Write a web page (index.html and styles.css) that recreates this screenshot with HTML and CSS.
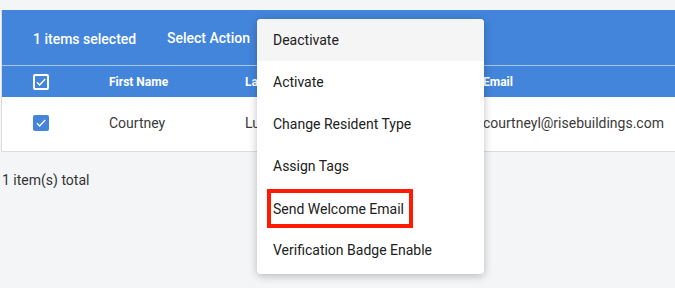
FILE: index.html
```html
<!DOCTYPE html>
<html lang="en">
<head>
  <meta charset="UTF-8" />
  <title>Residents</title>
  <link rel="stylesheet" href="styles.css">
</head>
<body>

  <!-- Residents table -->
  <div class="panel">
    <div class="bulkbar">
      <span class="count">1 items selected</span>
      <span class="action">Select Action</span>
    </div>
    <div class="row head">
      <span class="check outline">
        <svg viewBox="0 0 16 16" width="16" height="16"><path d="M4 8.3l2.6 2.6L12.2 5" fill="none" stroke="#fff" stroke-width="1.4"/></svg>
      </span>
      <span>First Name</span>
      <span>Last Name</span>
      <span>Email</span>
    </div>
    <div class="row body">
      <span class="check filled">
        <svg viewBox="0 0 16 16" width="16" height="16"><path d="M4 8.3l2.6 2.6L12.2 5" fill="none" stroke="#fff" stroke-width="1.4"/></svg>
      </span>
      <span>Courtney</span>
      <span>Luna</span>
      <span>courtneyl@risebuildings.com</span>
    </div>
  </div>

  <div class="total">1 item(s) total</div>

  <!-- Action menu -->
  <ul class="menu">
    <li class="hover">Deactivate</li>
    <li>Activate</li>
    <li>Change Resident Type</li>
    <li>Assign Tags</li>
    <li><span class="mark">Send Welcome Email</span></li>
    <li>Verification Badge Enable</li>
  </ul>

</body>
</html>
```

FILE: styles.css
```css
* {
  margin: 0; padding: 0; box-sizing: border-box;
}
body {
  font-family: Roboto, "Liberation Sans", sans-serif;
  background: #f4f5f7;
  color: #333;
  font-size: 14px;
  overflow: hidden;
}
.panel {
  margin: 10px 0 0 1px;
  width: 700px;
  border: 1px solid #dcdcdc;
  border-top: none;
  background: #fff;
}
.bulkbar {
  background: #4285db;
  height: 56px;
  display: flex;
  align-items: center;
  padding-left: 31px;
  color: #fff;
  font-weight: 500;
  border-bottom: 1px solid #a9c6ee;
}
.bulkbar .count {
  width: 134px;
  padding-top: 2px;
}
.row {
  display: grid;
  grid-template-columns: 76px 136px 238px 1fr;
  align-items: center;
  padding-left: 31px;
}
.row.head {
  background: #4285db;
  height: 31px;
  color: #fff;
  font-size: 12px;
  font-weight: 700;
}
.row.body {
  height: 54px;
  padding-bottom: 2px;
  color: #3a3a3a;
}
.check {
  width: 16px;
  height: 16px;
  display: flex;
  border-radius: 2px;
}
.check.outline {
  border: 2px solid #fff;
}
.check.outline svg {
  margin: -2px;
}
.check.filled {
  background: #4285db;
}
.total {
  padding: 20px 0 0 2px;
  color: #333;
}
.menu {
  position: absolute;
  left: 257px;
  top: 19px;
  width: 227px;
  height: 255px;
  list-style: none;
  background: #fff;
  border-radius: 4px;
  box-shadow: 0 2px 8px rgba(0,0,0,0.25);
  overflow: hidden;
}
.menu li {
  height: 42px;
  display: flex;
  align-items: center;
  padding-left: 16px;
  color: #212121;
}
.menu li.hover {
  background: #f5f5f5;
}
.mark {
  margin-left: -6px;
  padding: 9px 2px 8px 2px;
  border: 4px solid #ff1a00;
  width: 146px;
  line-height: 14px;
}
```
